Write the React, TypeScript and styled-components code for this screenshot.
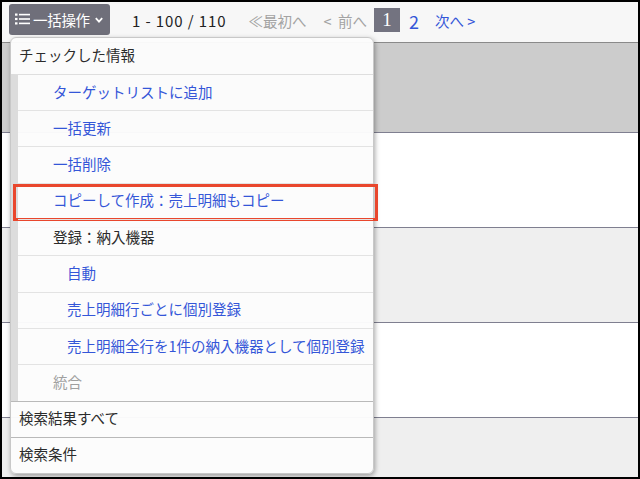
import styled, { createGlobalStyle } from 'styled-components';

const GlobalStyle = createGlobalStyle`
	html, body {
		margin: 0;
		padding: 0;
		background: #fff;
	}
	body {
		font-family: 'Noto Sans CJK JP', 'Noto Sans', sans-serif;
	}
`;

const Frame = styled.div`
	position: relative;
	width: 640px;
	height: 479px;
	box-sizing: border-box;
	border: 2px solid #000;
	overflow: hidden;
	background: #efefef;
`;

const Toolbar = styled.div`
	height: 40px;
	background: #f7f7f7;
	border-bottom: 1px solid #8a8a8a;
	display: flex;
	align-items: center;
	padding-left: 7px;
	box-sizing: content-box;
`;

const BulkButton = styled.div`
	height: 31px;
	width: 101px;
	margin-top: -5px;
	background: #6f6f7a;
	border-radius: 3px;
	color: #fff;
	display: flex;
	align-items: center;
	padding-left: 6px;
	padding-bottom: 1px;
	box-sizing: border-box;
	font-size: 14.5px;
	letter-spacing: -0.3px;
`;

const RangeText = styled.span`
	margin-left: 22px;
	margin-top: -3px;
	font-size: 15px;
	letter-spacing: 0.9px;
	color: #222;
`;

const PageLink = styled.span<{ $muted?: boolean; $gap: number; $size?: number }>`
	margin-left: ${(p) => p.$gap}px;
	margin-top: -3px;
	font-size: ${(p) => p.$size ?? 14.5}px;
	color: ${(p) => (p.$muted ? '#a3a3a3' : '#3456d8')};
	white-space: pre;
`;

const CurrentPage = styled.span`
	margin-left: 7px;
	margin-top: -4px;
	width: 26px;
	height: 24px;
	background: #737380;
	color: #fff;
	font-family: 'Liberation Serif', serif;
	font-size: 19px;
	display: flex;
	align-items: center;
	justify-content: center;
`;

const Table = styled.div`
	display: flex;
	flex-direction: column;
`;

const HeaderRow = styled.div`
	height: 89px;
	background: #cccccc;
	border-bottom: 1px solid #7f7f90;
`;

const BodyRow = styled.div<{ $alt?: boolean }>`
	height: 94px;
	background: ${(p) => (p.$alt ? '#efefef' : '#ffffff')};
	border-bottom: 1px solid #7f7f90;
`;

const Menu = styled.div`
	position: absolute;
	left: 8px;
	top: 35px;
	width: 364px;
	background: rgba(252, 252, 252, 0.97);
	border: 1px solid #c8c8c8;
	border-radius: 6px;
	box-shadow: 1px 2px 5px rgba(0, 0, 0, 0.35);
	box-sizing: border-box;
`;

const MenuItem = styled.div<{ $top?: boolean }>`
	height: 36px;
	display: flex;
	align-items: center;
	padding-left: 8px;
	padding-bottom: 3px;
	box-sizing: border-box;
	font-size: 14.5px;
	color: #2b2b2b;
	border-top: ${(p) => (p.$top ? '1px solid #b9b9b9' : 'none')};
`;

const SubGroup = styled.div`
	border-top: 1px solid #dedede;
	border-left: 7px solid #dcdcdc;
`;

const SubItem = styled.div<{ $depth?: number; $tone?: 'link' | 'plain' | 'muted' }>`
	position: relative;
	height: 35.2px;
	display: flex;
	align-items: center;
	padding-left: ${(p) => (p.$depth === 2 ? 49 : 35)}px;
	padding-bottom: 3px;
	box-sizing: border-box;
	font-size: 14.5px;
	color: ${(p) =>
		p.$tone === 'plain' ? '#2b2b2b' : p.$tone === 'muted' ? '#a0a0a0' : '#3456d8'};
	& + & {
		border-top: 1px solid #e3e3e3;
		height: 36.3px;
	}
`;

const Highlight = styled.span`
	position: absolute;
	left: -5px;
	right: -5px;
	top: 0px;
	bottom: -2px;
	border: 3px solid #e9472d;
	pointer-events: none;
`;

function ListIcon() {
	return (
		<svg width="15" height="12" viewBox="0 0 15 12" style={{ marginRight: 3 }}>
			<rect x="0" y="0.5" width="2.5" height="2.2" fill="#fff" />
			<rect x="0" y="4.9" width="2.5" height="2.2" fill="#fff" />
			<rect x="0" y="9.3" width="2.5" height="2.2" fill="#fff" />
			<rect x="4" y="0.8" width="11" height="1.6" fill="#fff" />
			<rect x="4" y="5.2" width="11" height="1.6" fill="#fff" />
			<rect x="4" y="9.6" width="11" height="1.6" fill="#fff" />
		</svg>
	);
}

function ChevronDown() {
	return (
		<svg width="8" height="6" viewBox="0 0 8 6" style={{ marginLeft: 5, marginTop: 2 }}>
			<path d="M0.8 1.2 L4 4.6 L7.2 1.2" fill="none" stroke="#fff" strokeWidth="1.8" />
		</svg>
	);
}

export default function App() {
	return (
		<>
			<GlobalStyle />
			<Frame>
				<Toolbar>
					<BulkButton>
						<ListIcon />
						一括操作
						<ChevronDown />
					</BulkButton>
					<RangeText>1 - 100 / 110</RangeText>
					<PageLink $muted $gap={22}>≪最初へ</PageLink>
					<PageLink $muted $gap={17}>{'<  前へ'}</PageLink>
					<CurrentPage>1</CurrentPage>
					<PageLink $gap={9} $size={18}>2</PageLink>
					<PageLink $gap={16}>{'次へ >'}</PageLink>
				</Toolbar>
				<Table>
					<HeaderRow />
					<BodyRow />
					<BodyRow $alt />
					<BodyRow />
					<BodyRow $alt />
				</Table>
				<Menu>
					<MenuItem>チェックした情報</MenuItem>
					<SubGroup>
						<SubItem>ターゲットリストに追加</SubItem>
						<SubItem>一括更新</SubItem>
						<SubItem>一括削除</SubItem>
						<SubItem>
							コピーして作成：売上明細もコピー
							<Highlight />
						</SubItem>
						<SubItem $tone="plain">登録：納入機器</SubItem>
						<SubItem $depth={2}>自動</SubItem>
						<SubItem $depth={2}>売上明細行ごとに個別登録</SubItem>
						<SubItem $depth={2}>売上明細全行を1件の納入機器として個別登録</SubItem>
						<SubItem $tone="muted">統合</SubItem>
					</SubGroup>
					<MenuItem $top>検索結果すべて</MenuItem>
					<MenuItem $top>検索条件</MenuItem>
				</Menu>
			</Frame>
		</>
	);
}
